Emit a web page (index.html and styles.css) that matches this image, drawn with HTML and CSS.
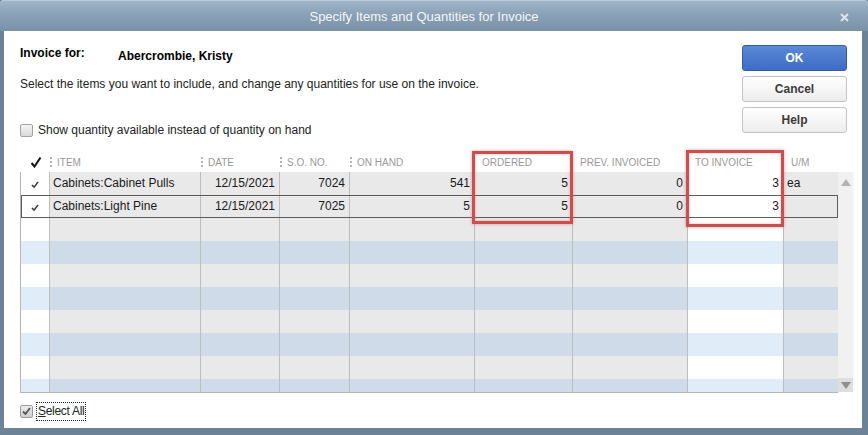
FILE: index.html
```html
<!DOCTYPE html>
<html>
<head>
  <meta charset="utf-8">
  <title>Specify Items and Quantities for Invoice</title>
  <link rel="stylesheet" href="styles.css">
</head>
<body>
  <div class="window">
    <div class="titlebar">
      <span class="title">Specify Items and Quantities for Invoice</span>
      <svg class="close" width="9" height="9" viewBox="0 0 9 9">
        <path d="M1 1 L8 8 M8 1 L1 8" stroke="#dfe4e8" stroke-width="2"/>
      </svg>
    </div>

    <div class="content">
      <!-- TOP: customer, hint, option + buttons -->
      <div class="top">
        <div class="info">
          <div class="invoice-for">
            <span class="label">Invoice for:</span>
            <span class="customer">Abercrombie, Kristy</span>
          </div>
          <p class="hint">Select the items you want to include, and change any quantities for use on the invoice.</p>
          <label class="check-row">
            <span class="box"></span>
            <span>Show quantity available instead of quantity on hand</span>
          </label>
        </div>
        <div class="buttons">
          <button class="btn btn-primary">OK</button>
          <button class="btn">Cancel</button>
          <button class="btn">Help</button>
        </div>
      </div>

      <!-- GRID -->
      <div class="grid-area">
        <div class="grid">
          <div class="grid-head">
            <div class="hcell hcheck">
              <svg width="12" height="12" viewBox="0 0 12 12">
                <path d="M1.5 7 L4.5 10.5 L10.5 1.5" stroke="#111" stroke-width="2" fill="none"/>
              </svg>
            </div>
            <div class="hcell sep">Item</div>
            <div class="hcell sep">Date</div>
            <div class="hcell sep">S.O. No.</div>
            <div class="hcell sep">On Hand</div>
            <div class="hcell">Ordered</div>
            <div class="hcell">Prev. Invoiced</div>
            <div class="hcell">To Invoice</div>
            <div class="hcell">U/M</div>
          </div>

          <div class="grid-body">
            <div class="row">
              <div class="cell ccheck"><svg width="8" height="7" viewBox="0 0 9 8"><path d="M1 4.5 L3.5 7 L8 1" stroke="#3a3a3a" stroke-width="1.8" fill="none"/></svg></div>
              <div class="cell">Cabinets:Cabinet Pulls</div>
              <div class="cell num">12/15/2021</div>
              <div class="cell num">7024</div>
              <div class="cell num">541</div>
              <div class="cell num">5</div>
              <div class="cell num">0</div>
              <div class="cell num cedit">3</div>
              <div class="cell">ea</div>
            </div>
            <div class="row selected">
              <div class="cell ccheck"><svg width="8" height="7" viewBox="0 0 9 8"><path d="M1 4.5 L3.5 7 L8 1" stroke="#3a3a3a" stroke-width="1.8" fill="none"/></svg></div>
              <div class="cell">Cabinets:Light Pine</div>
              <div class="cell num">12/15/2021</div>
              <div class="cell num">7025</div>
              <div class="cell num">5</div>
              <div class="cell num">5</div>
              <div class="cell num">0</div>
              <div class="cell num cedit">3</div>
              <div class="cell"></div>
            </div>
            <div class="row empty"><div class="cell ccheck"></div><div class="cell"></div><div class="cell"></div><div class="cell"></div><div class="cell"></div><div class="cell"></div><div class="cell"></div><div class="cell cedit"></div><div class="cell"></div></div>
            <div class="row empty alt"><div class="cell ccheck"></div><div class="cell"></div><div class="cell"></div><div class="cell"></div><div class="cell"></div><div class="cell"></div><div class="cell"></div><div class="cell cedit"></div><div class="cell"></div></div>
            <div class="row empty"><div class="cell ccheck"></div><div class="cell"></div><div class="cell"></div><div class="cell"></div><div class="cell"></div><div class="cell"></div><div class="cell"></div><div class="cell cedit"></div><div class="cell"></div></div>
            <div class="row empty alt"><div class="cell ccheck"></div><div class="cell"></div><div class="cell"></div><div class="cell"></div><div class="cell"></div><div class="cell"></div><div class="cell"></div><div class="cell cedit"></div><div class="cell"></div></div>
            <div class="row empty"><div class="cell ccheck"></div><div class="cell"></div><div class="cell"></div><div class="cell"></div><div class="cell"></div><div class="cell"></div><div class="cell"></div><div class="cell cedit"></div><div class="cell"></div></div>
            <div class="row empty alt"><div class="cell ccheck"></div><div class="cell"></div><div class="cell"></div><div class="cell"></div><div class="cell"></div><div class="cell"></div><div class="cell"></div><div class="cell cedit"></div><div class="cell"></div></div>
            <div class="row empty"><div class="cell ccheck"></div><div class="cell"></div><div class="cell"></div><div class="cell"></div><div class="cell"></div><div class="cell"></div><div class="cell"></div><div class="cell cedit"></div><div class="cell"></div></div>
            <div class="row empty alt"><div class="cell ccheck"></div><div class="cell"></div><div class="cell"></div><div class="cell"></div><div class="cell"></div><div class="cell"></div><div class="cell"></div><div class="cell cedit"></div><div class="cell"></div></div>
          </div>
        </div>

        <div class="scrollbar">
          <div class="sb-arrow sb-up"></div>
          <div class="sb-track"></div>
          <div class="sb-arrow sb-down"></div>
        </div>

        <!-- red callout boxes drawn over the grid -->
        <div class="highlight hl-ordered"></div>
        <div class="highlight hl-toinvoice"></div>
      </div>

      <!-- FOOTER -->
      <div class="footer">
        <label class="check-row">
          <span class="box checked">
            <svg width="9" height="8" viewBox="0 0 9 8"><path d="M1 4.5 L3.5 7 L8 1" stroke="#555" stroke-width="1.8" fill="none"/></svg>
          </span>
          <span class="focus"><u>S</u>elect All</span>
        </label>
      </div>
    </div>
  </div>
</body>
</html>
```

FILE: styles.css
```css
body {
  margin: 0;
  font-family: "Liberation Sans", Arial, sans-serif;
  font-size: 12px;
  color: #1c1c1c;
}
.window {
  width: 868px;
  height: 435px;
  background: #6c8296;
  display: flex;
  flex-direction: column;
  box-sizing: border-box;
}
.titlebar {
  height: 31px;
  flex: none;
  display: flex;
  align-items: center;
  justify-content: center;
  position: relative;
  padding-right: 20px;
  background: linear-gradient(#a2b7ca, #8aa1b6 45%, #7a92a8);
  border-radius: 4px 4px 0 0;
  box-shadow: inset 0 1px 0 #b9cad8;
}
.title {
  color: #f5f7f9;
  font-size: 13px;
  padding-top: 1px;
}
.close {
  position: absolute;
  right: 19px;
  top: 13px;
}
.content {
  flex: 1;
  background: #fff;
  margin: 0 6px 7px 4px;
  padding: 0 7px 0 16px;
  display: flex;
  flex-direction: column;
}

/* top section */
.top {
  display: flex;
  justify-content: space-between;
  padding-top: 14px;
}
.invoice-for {
  display: flex;
  height: 16px;
  align-items: center;
  font-weight: bold;
  color: #000;
}
.invoice-for .label {
  width: 98px;
  font-size: 12px;
}
.invoice-for .customer {
  padding-top: 5px;
  font-size: 12px;
}
.hint {
  margin: 15px 0 0;
  line-height: 16px;
  color: #222;
}
.check-row {
  display: flex;
  align-items: center;
  gap: 5px;
  height: 16px;
  color: #222;
}
.info .check-row {
  margin-top: 30px;
}
.box {
  width: 11px;
  height: 11px;
  border: 1px solid #a4a4a4;
  border-radius: 2px;
  background: linear-gradient(#f6f6f6, #d9d9d9);
  display: flex;
  align-items: center;
  justify-content: center;
}
.buttons {
  display: flex;
  flex-direction: column;
  gap: 5px;
  width: 105px;
  margin-right: 8px;
}
.btn {
  height: 26px;
  border: 1px solid #c3c3c3;
  border-radius: 3px;
  background: linear-gradient(#ffffff, #ececec);
  font-family: "Liberation Sans", Arial, sans-serif;
  font-size: 12px;
  font-weight: bold;
  color: #3b3b3b;
  padding: 0;
}
.btn-primary {
  border-color: #2f5ca6;
  background: linear-gradient(#5a89d8, #3d6cc4);
  color: #fff;
}

/* grid */
.grid-area {
  position: relative;
  display: flex;
  margin-top: 14px;
}
.grid {
  width: 818px;
}
.grid-head,
.row {
  display: grid;
  grid-template-columns: 29px 151px 79px 70px 125px 98px 115px 96px 55px;
}
.grid-head {
  height: 20px;
}
.hcell {
  font-size: 10px;
  text-transform: uppercase;
  color: #999;
  padding-left: 8px;
  display: flex;
  align-items: center;
  position: relative;
}
.hcell.sep::before {
  content: "";
  position: absolute;
  left: 1px;
  top: 5px;
  height: 10px;
  border-left: 2px dotted #b3b3b3;
}
.hcell.hcheck {
  padding-left: 10px;
}
.grid-body {
  height: 220px;
  overflow: hidden;
  border-left: 1px solid #b5b5b5;
  border-bottom: 1px solid #b5b5b5;
}
.row {
  height: 23px;
}
.cell {
  background: #e9e9e9;
  border-right: 1px solid #bdbdbd;
  line-height: 22px;
  padding: 0 3px;
  white-space: nowrap;
  overflow: hidden;
  color: #1a1a1a;
}
.cell:last-child {
  border-right: none;
}
.cell.num {
  text-align: right;
  padding-right: 4px;
}
.cell.ccheck {
  background: #fff;
  display: flex;
  align-items: center;
  justify-content: center;
  padding: 2px 0 0;
}
.cell.cedit {
  background: #fff;
}
.row.alt .cell {
  background: #cfdbe9;
}
.row.alt .cell.ccheck,
.row.alt .cell.cedit {
  background: #e1ecf9;
}
.row.selected {
  outline: 1px solid #5b5b5b;
  outline-offset: -1px;
}

/* scrollbar */
.scrollbar {
  width: 15px;
  margin-top: 20px;
  margin-bottom: 1px;
  display: flex;
  flex-direction: column;
  background: #f1f1f1;
  border-right: 2px solid #fafafa;
}
.sb-track {
  flex: 1;
}
.sb-arrow {
  height: 14px;
  display: flex;
  align-items: center;
  justify-content: center;
}
.sb-up::after {
  content: "";
  border: 5px solid transparent;
  border-bottom: 7px solid #b3b3b3;
  border-top: none;
  margin-top: 6px;
}
.sb-down {
  background: #dedede;
}
.sb-down::after {
  content: "";
  border: 5px solid transparent;
  border-top: 7px solid #8e8e8e;
  border-bottom: none;
}

/* red callouts */
.highlight {
  position: absolute;
  border: 3px solid #c9504e;
  box-shadow: 0 0 3px rgba(201, 80, 78, 0.55), inset 0 0 3px rgba(201, 80, 78, 0.45);
}
.hl-ordered {
  left: 452px;
  top: -1px;
  width: 95px;
  height: 67px;
}
.hl-toinvoice {
  left: 666px;
  top: -2px;
  width: 92px;
  height: 71px;
}

/* footer */
.footer {
  margin-top: 9px;
}
.footer .check-row {
  height: 18px;
  gap: 4px;
}
.box.checked {
  background: linear-gradient(#ececec, #cfcfcf);
  border-color: #9c9c9c;
}
.focus {
  outline: 1px dotted #222;
  padding: 1px 1px 2px;
  letter-spacing: -0.3px;
}
```
